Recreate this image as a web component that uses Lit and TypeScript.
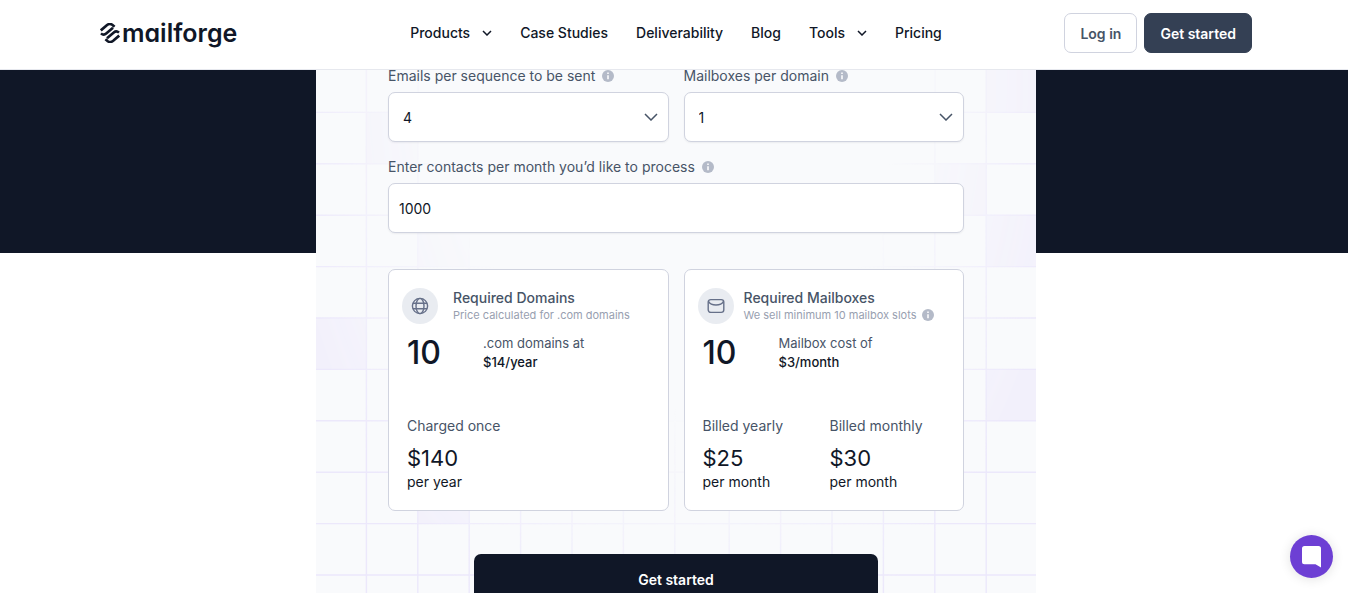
import { LitElement, html, svg, css } from "lit";
import { customElement, property } from "lit/decorators.js";

const infoIcon = html`<svg class="info" viewBox="0 0 12 12" aria-hidden="true">
  <circle cx="6" cy="6" r="6" fill="#b4bac8" />
  <path d="M6 2.600v1.500M6 5.200v4" fill="none" stroke="#fff" stroke-width="1.500" />
</svg>`;

const chevron = html`<svg class="chev" viewBox="0 0 10 6" aria-hidden="true">
  <path d="M1 1l4 4 4-4" fill="none" stroke="currentColor" stroke-width="1.5" />
</svg>`;

const selectArrow = html`<svg class="arrow" viewBox="0 0 14 8" aria-hidden="true">
  <path d="M1 1l6 6 6-6" fill="none" stroke="currentColor" stroke-width="1.5" />
</svg>`;

@customElement("grid-backdrop")
export class GridBackdrop extends LitElement {
  static styles = css`
    :host { display: block; overflow: hidden; }
    .grid { display: block; width: 100%; height: 100%; }
  `;

  render() {
    const pitch = 51.4;
    // The two halves of the pattern meet with a slightly wider middle column.
    const colX = (c: number) => -1 + c * pitch + (c > 7 ? 3 : 0);
    const rowY = (r: number) => -9 + r * pitch;
    const cells = [
      [13, 0], [1, 1], [12, 2], [13, 3], [2, 3], [0, 5], [13, 6], [2, 8],
    ];
    const steps = Array.from({ length: 14 }, (_, i) => i);
    return html`<svg class="grid" aria-hidden="true">
      <defs>
        <radialGradient id="fade" gradientUnits="userSpaceOnUse" cx="0" cy="0" r="1"
          gradientTransform="translate(360 8) scale(400 600)">
          <stop offset="0.55" stop-color="#fff" stop-opacity="0" />
          <stop offset="0.78" stop-color="#fff" stop-opacity="0.45" />
          <stop offset="1" stop-color="#fff" stop-opacity="1" />
        </radialGradient>
        <mask id="edge" maskUnits="userSpaceOnUse" x="0" y="0" width="720" height="800">
          <rect width="720" height="800" fill="url(#fade)" />
        </mask>
      </defs>
      <g mask="url(#edge)">
        ${cells.map(([c, r]) => svg`<rect x=${colX(c)} y=${rowY(r)} width=${pitch} height=${pitch} fill="#f2f0fb" />`)}
        ${steps.map((i) => svg`<path d="M${colX(i)} 0V800M0 ${rowY(i)}H720" stroke="#ece8fb" stroke-width="1.4" />`)}
      </g>
    </svg>`;
  }
}

@customElement("summary-card")
export class SummaryCard extends LitElement {
  @property() heading = "";
  @property() note = "";
  @property() icon = "globe";
  @property() count = "";
  @property() unit = "";
  @property() rate = "";
  @property({ attribute: false }) prices: string[][] = [];

  static styles = css`
    :host {
      display: block;
      box-sizing: border-box;
      padding: 18px 13px;
      border: 1px solid #d0d3df;
      border-radius: 7px;
      background: #fff;
      color: #101727;
    }
    .head { display: flex; align-items: flex-start; gap: 15px; }
    .head.mail { gap: 10px; }
    .badge {
      display: grid;
      place-items: center;
      flex: none;
      width: 36px;
      height: 36px;
      border-radius: 50%;
      background: #e9ecf1;
    }
    .badge svg { width: 18px; height: 18px; fill: none; stroke: #667089; stroke-width: 1.4; }
    h3 { margin: 0; font-size: 14px; line-height: 20px; font-weight: 500; color: #475467; white-space: nowrap; }
    .note { margin: 0; display: flex; align-items: center; gap: 6px; font-size: 11px; line-height: 14px; color: #98a0b0; white-space: nowrap; }
    .info { width: 12px; height: 12px; }
    .stats { display: grid; grid-template-columns: 76px 1fr; align-items: center; margin: 10px 5px 44px; }
    .count { font-size: 32px; line-height: 38px; font-weight: 500; }
    .stats p { margin: 0; font-size: 13px; line-height: 19px; color: #475467; }
    .stats .rate { color: #101727; font-weight: 500; }
    .prices { display: grid; grid-template-columns: 127px 1fr; margin: 0 5px; }
    .prices p { margin: 0; font-size: 14px; line-height: 20px; white-space: nowrap; }
    .prices .term { color: #475467; margin-bottom: 8px; }
    .prices .amount { font-size: 22px; line-height: 28px; }
  `;

  render() {
    const mail = this.icon === "mail";
    return html`
      <div class="head ${this.icon}">
        <span class="badge">
          ${mail
            ? html`<svg viewBox="0 0 18 18"><rect x="1.2" y="2.6" width="15.6" height="12.8" rx="2.6" /><path d="M1.400 4.400C3 7.200 6 8 9 8s6-.8 7.600-3.600" /></svg>`
            : html`<svg viewBox="0 0 18 18"><circle cx="9" cy="9" r="7.600" /><ellipse cx="9" cy="9" rx="4" ry="7.600" /><path d="M2 6.200h14M2 11.800h14" /></svg>`}
        </span>
        <div>
          <h3>${this.heading}</h3>
          <p class="note">${this.note}${mail ? infoIcon : ""}</p>
        </div>
      </div>
      <div class="stats">
        <span class="count">${this.count}</span>
        <div><p>${this.unit}</p><p class="rate">${this.rate}</p></div>
      </div>
      <div class="prices">
        ${this.prices.map(([term, amount, per]) => html`<div>
          <p class="term">${term}</p>
          <p class="amount">${amount}</p>
          <p>${per}</p>
        </div>`)}
      </div>`;
  }
}

@customElement("app-root")
export class AppRoot extends LitElement {
  static styles = css`
    :host {
      display: block;
      height: 100vh;
      overflow-y: auto;
      scrollbar-width: none;
      background: #fff;
      color: #101727;
      font-family: Inter, "Liberation Sans", sans-serif;
    }
    * { box-sizing: border-box; }
    a { color: inherit; text-decoration: none; }
    button, input, select { font: inherit; color: inherit; }
    header {
      position: sticky;
      top: 0;
      z-index: 2;
      padding-left: 4px;
      border-bottom: 1px solid #e6e8ee;
      background: #fff;
    }
    .bar {
      display: grid;
      grid-template-columns: 1fr auto 1fr;
      align-items: center;
      max-width: 1152px;
      margin: 0 auto;
      padding: 13px 0 16px;
    }
    .logo { display: flex; align-items: center; gap: 2px; font-size: 25px; line-height: 32px; font-weight: 600; font-feature-settings: "cv11"; }
    .logo svg { width: 20px; height: 20px; }
    nav { display: flex; align-items: center; gap: 28px; font-size: 14px; line-height: 20px; font-weight: 500; }
    nav a { display: flex; align-items: center; gap: 12px; }
    .chev { width: 10px; height: 6px; }
    .actions { display: flex; justify-content: flex-end; gap: 7px; }
    .btn {
      height: 40px;
      padding: 0 15px;
      border: 1px solid #d0d3df;
      border-radius: 7px;
      background: #fff;
      color: #475467;
      font-size: 14px;
      font-weight: 600;
    }
    .btn.dark { border-color: #344054; background: #344054; color: #fff; }
    main { padding-left: 4px; background: linear-gradient(#101727, #101727) 0 0 / 100% 183px no-repeat; }
    .panel { display: grid; max-width: 720px; margin: 0 auto; background: #f9fafc; }
    .panel > * { grid-area: 1 / 1; min-width: 0; }
    grid-backdrop { height: 0; min-height: 100%; }
    form { position: relative; display: flex; flex-direction: column; gap: 15px; width: 80%; margin: -4px auto 24px; }
    .pair { display: grid; grid-template-columns: 1fr 1fr; gap: 15px; }
    .field { display: flex; flex-direction: column; gap: 6px; }
    label { display: flex; align-items: center; gap: 7px; font-size: 14px; line-height: 20px; color: #475467; }
    .info { width: 12px; height: 12px; }
    .control { display: grid; align-items: center; }
    .control > * { grid-area: 1 / 1; }
    .arrow { justify-self: end; width: 14px; height: 8px; margin-right: 11px; color: #475467; pointer-events: none; }
    select, input {
      width: 100%;
      height: 50px;
      border: 1px solid #d0d3df;
      border-radius: 7px;
      background: #fff;
      box-shadow: 0 1px 2px rgba(16, 24, 40, 0.06);
      font-size: 14px;
      appearance: none;
    }
    select { padding: 0 14px; }
    input { padding: 0 10px; }
    .cards { margin-top: 21px; }
    .cta {
      align-self: center;
      width: 70%;
      height: 50px;
      margin-top: 28px;
      border: 0;
      border-radius: 7px;
      background: #101727;
      color: #fff;
      font-size: 14px;
      font-weight: 600;
    }
    .chat {
      position: fixed;
      right: 15px;
      bottom: 15px;
      z-index: 3;
      width: 43px;
      height: 43px;
      padding: 0;
      border: 0;
      border-radius: 50%;
      background: #6d3fd4;
      box-shadow: 0 1px 12px rgba(0, 0, 0, 0.12);
    }
    .chat svg { display: block; width: 43px; height: 43px; }
  `;

  render() {
    return html`
      <header>
        <div class="bar">
          <a class="logo" href="#">
            <svg viewBox="0 0 20 20" fill="none" stroke="#101727" stroke-width="2.6" stroke-linejoin="round" aria-hidden="true">
              <path d="M.8 7.400L6.800 2.200Q9.600 0 12.200 1.800L14.600 3.800M1 10.400Q3.600 12.800 6.200 10.600L13 4.800" />
              <path d="M19.200 12.600L13.200 17.800Q10.400 20 7.800 18.200L5.400 16.200M19 9.600Q16.400 7.200 13.800 9.400L7 15.200" />
            </svg>
            <span>mailforge</span>
          </a>
          <nav>
            <a href="#">Products ${chevron}</a>
            <a href="#">Case Studies</a>
            <a href="#">Deliverability</a>
            <a href="#">Blog</a>
            <a href="#">Tools ${chevron}</a>
            <a href="#">Pricing</a>
          </nav>
          <div class="actions">
            <button class="btn">Log in</button>
            <button class="btn dark">Get started</button>
          </div>
        </div>
      </header>
      <main>
        <div class="panel">
          <grid-backdrop></grid-backdrop>
          <form>
            <div class="pair">
              <div class="field">
                <label for="emails">Emails per sequence to be sent ${infoIcon}</label>
                <div class="control"><select id="emails"><option>4</option></select>${selectArrow}</div>
              </div>
              <div class="field">
                <label for="boxes">Mailboxes per domain ${infoIcon}</label>
                <div class="control"><select id="boxes"><option>1</option></select>${selectArrow}</div>
              </div>
            </div>
            <div class="field">
              <label for="contacts">Enter contacts per month you’d like to process ${infoIcon}</label>
              <input id="contacts" type="text" inputmode="numeric" .value=${"1000"} />
            </div>
            <div class="pair cards">
              <summary-card heading="Required Domains" note="Price calculated for .com domains" icon="globe"
                count="10" unit=".com domains at" rate="$14/year"
                .prices=${[["Charged once", "$140", "per year"]]}></summary-card>
              <summary-card heading="Required Mailboxes" note="We sell minimum 10 mailbox slots" icon="mail"
                count="10" unit="Mailbox cost of" rate="$3/month"
                .prices=${[["Billed yearly", "$25", "per month"], ["Billed monthly", "$30", "per month"]]}></summary-card>
            </div>
            <button class="cta" type="button">Get started</button>
          </form>
        </div>
      </main>
      <button class="chat" aria-label="Open chat">
        <svg viewBox="0 0 43 43"><path d="M14.500 11h14a2.500 2.500 0 0 1 2.500 2.500v19l-5.500-3.200h-11a2.500 2.500 0 0 1-2.500-2.500v-13.300a2.500 2.500 0 0 1 2.500-2.500z" fill="#fff" /></svg>
      </button>`;
  }
}
